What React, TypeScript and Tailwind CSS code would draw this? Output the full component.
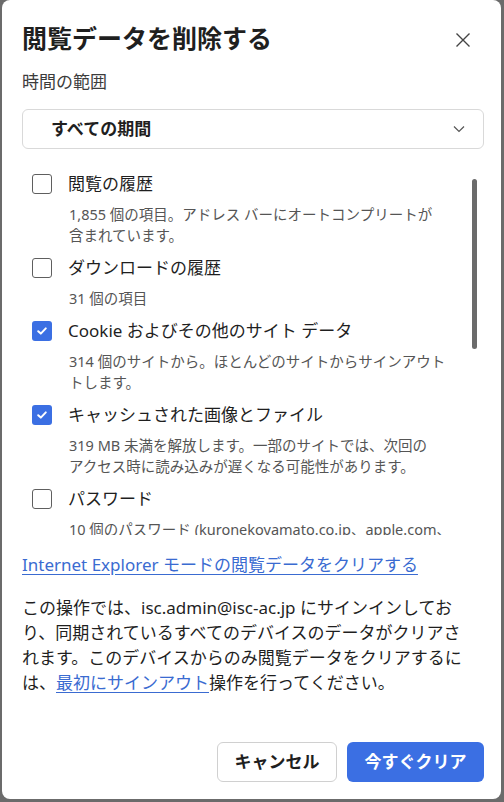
import React from 'react';

type Item = { label: string; desc: React.ReactNode; checked: boolean };

const items: Item[] = [
  {
    label: '閲覧の履歴',
    desc: (
      <>
        1,855 個の項目。アドレス バーにオートコンプリートが
        <br />
        含まれています。
      </>
    ),
    checked: false,
  },
  { label: 'ダウンロードの履歴', desc: '31 個の項目', checked: false },
  {
    label: 'Cookie およびその他のサイト データ',
    desc: (
      <>
        314 個のサイトから。ほとんどのサイトからサインアウト
        <br />
        トします。
      </>
    ),
    checked: true,
  },
  {
    label: 'キャッシュされた画像とファイル',
    desc: (
      <>
        319 MB 未満を解放します。一部のサイトでは、次回の
        <br />
        アクセス時に読み込みが遅くなる可能性があります。
      </>
    ),
    checked: true,
  },
  {
    label: 'パスワード',
    desc: '10 個のパスワード (kuronekoyamato.co.jp、apple.com、',
    checked: false,
  },
];

function Checkbox({ checked }: { checked: boolean }) {
  if (checked) {
    return (
      <span className="flex h-[20px] w-[20px] shrink-0 items-center justify-center rounded-[3px] bg-[#3b6fe3]">
        <svg width="12" height="12" viewBox="0 0 12 12" fill="none">
          <path d="M2.2 6.2 4.8 8.6 9.8 3.4" stroke="white" strokeWidth="2" strokeLinecap="round" strokeLinejoin="round" />
        </svg>
      </span>
    );
  }
  return <span className="h-[20px] w-[20px] shrink-0 rounded-[3px] border-[1.5px] border-[#5f5f5f]" />;
}

export default function App() {
  return (
    <div className="h-[802px] w-[504px] bg-[#6b6b6b] pb-[3px] pl-[2px] pr-[3px] font-['Noto_Sans','Noto_Sans_CJK_JP',sans-serif]">
      <div className="flex h-[799px] flex-col rounded-[8px] bg-white pl-[20px] pr-[17px]">
        {/* header */}
        <div className="flex items-center justify-between pt-[24px]">
          <h1 className="text-[25px] font-bold leading-[28px] text-[#1f1f1f]">閲覧データを削除する</h1>
          <svg width="16" height="16" viewBox="0 0 16 16" className="mr-[13px] mt-[4px]">
            <path d="M1.5 1.5 14.5 14.5M14.5 1.5 1.5 14.5" stroke="#444" strokeWidth="1.4" />
          </svg>
        </div>

        <div className="mt-[18px] text-[17px] leading-[24px] text-[#3c3c3c]">時間の範囲</div>

        <div className="mt-[15px] flex h-[40px] items-center justify-between rounded-[6px] border border-[#d9d9d9] pl-[28px] pr-[18px]">
          <span className="text-[17px] font-bold text-[#1f1f1f]">すべての期間</span>
          <svg width="12" height="8" viewBox="0 0 12 8" fill="none">
            <path d="M1 1.5 6 6.5 11 1.5" stroke="#555" strokeWidth="1.2" />
          </svg>
        </div>

        {/* scrolling list */}
        <div className="relative mt-[11px] h-[375px] overflow-hidden pl-[10px] pt-[12px]">
          {items.map((it) => (
            <div key={it.label} className="pb-[10px]">
              <div className="flex h-[24px] items-center gap-[16px]">
                <Checkbox checked={it.checked} />
                <span className="text-[17px] leading-[24px] text-[#1f1f1f]">{it.label}</span>
              </div>
              <p className="mt-[8px] whitespace-nowrap pl-[37px] text-[14.5px] leading-[21px] text-[#555]">{it.desc}</p>
            </div>
          ))}
          <div className="absolute right-[7px] top-[19px] h-[170px] w-[5px] rounded-full bg-[#6b6b6b]" />
        </div>

        <a className="mt-[18px] text-[17px] leading-[24px] text-[#3a6bd1] underline underline-offset-[3px]">
          Internet Explorer モードの閲覧データをクリアする
        </a>

        <p className="mt-[18px] text-[17px] leading-[25px] text-[#1f1f1f]">
          この操作では、isc.admin@isc-ac.jp にサインインしてお
          <br />
          り、同期されているすべてのデバイスのデータがクリアさ
          <br />
          れます。このデバイスからのみ閲覧データをクリアするに
          <br />
          は、<a className="text-[#3a6bd1] underline underline-offset-[3px]">最初にサインアウト</a>操作を行ってください。
        </p>

        <div className="mt-auto flex justify-end gap-[10px] pb-[17px]">
          <button className="h-[40px] w-[120px] rounded-[6px] border border-[#d0d0d0] text-[17px] font-bold text-[#1f1f1f]">
            キャンセル
          </button>
          <button className="h-[40px] w-[137px] rounded-[6px] bg-[#3b6fe3] text-[17px] font-bold text-white">
            今すぐクリア
          </button>
        </div>
      </div>
    </div>
  );
}
